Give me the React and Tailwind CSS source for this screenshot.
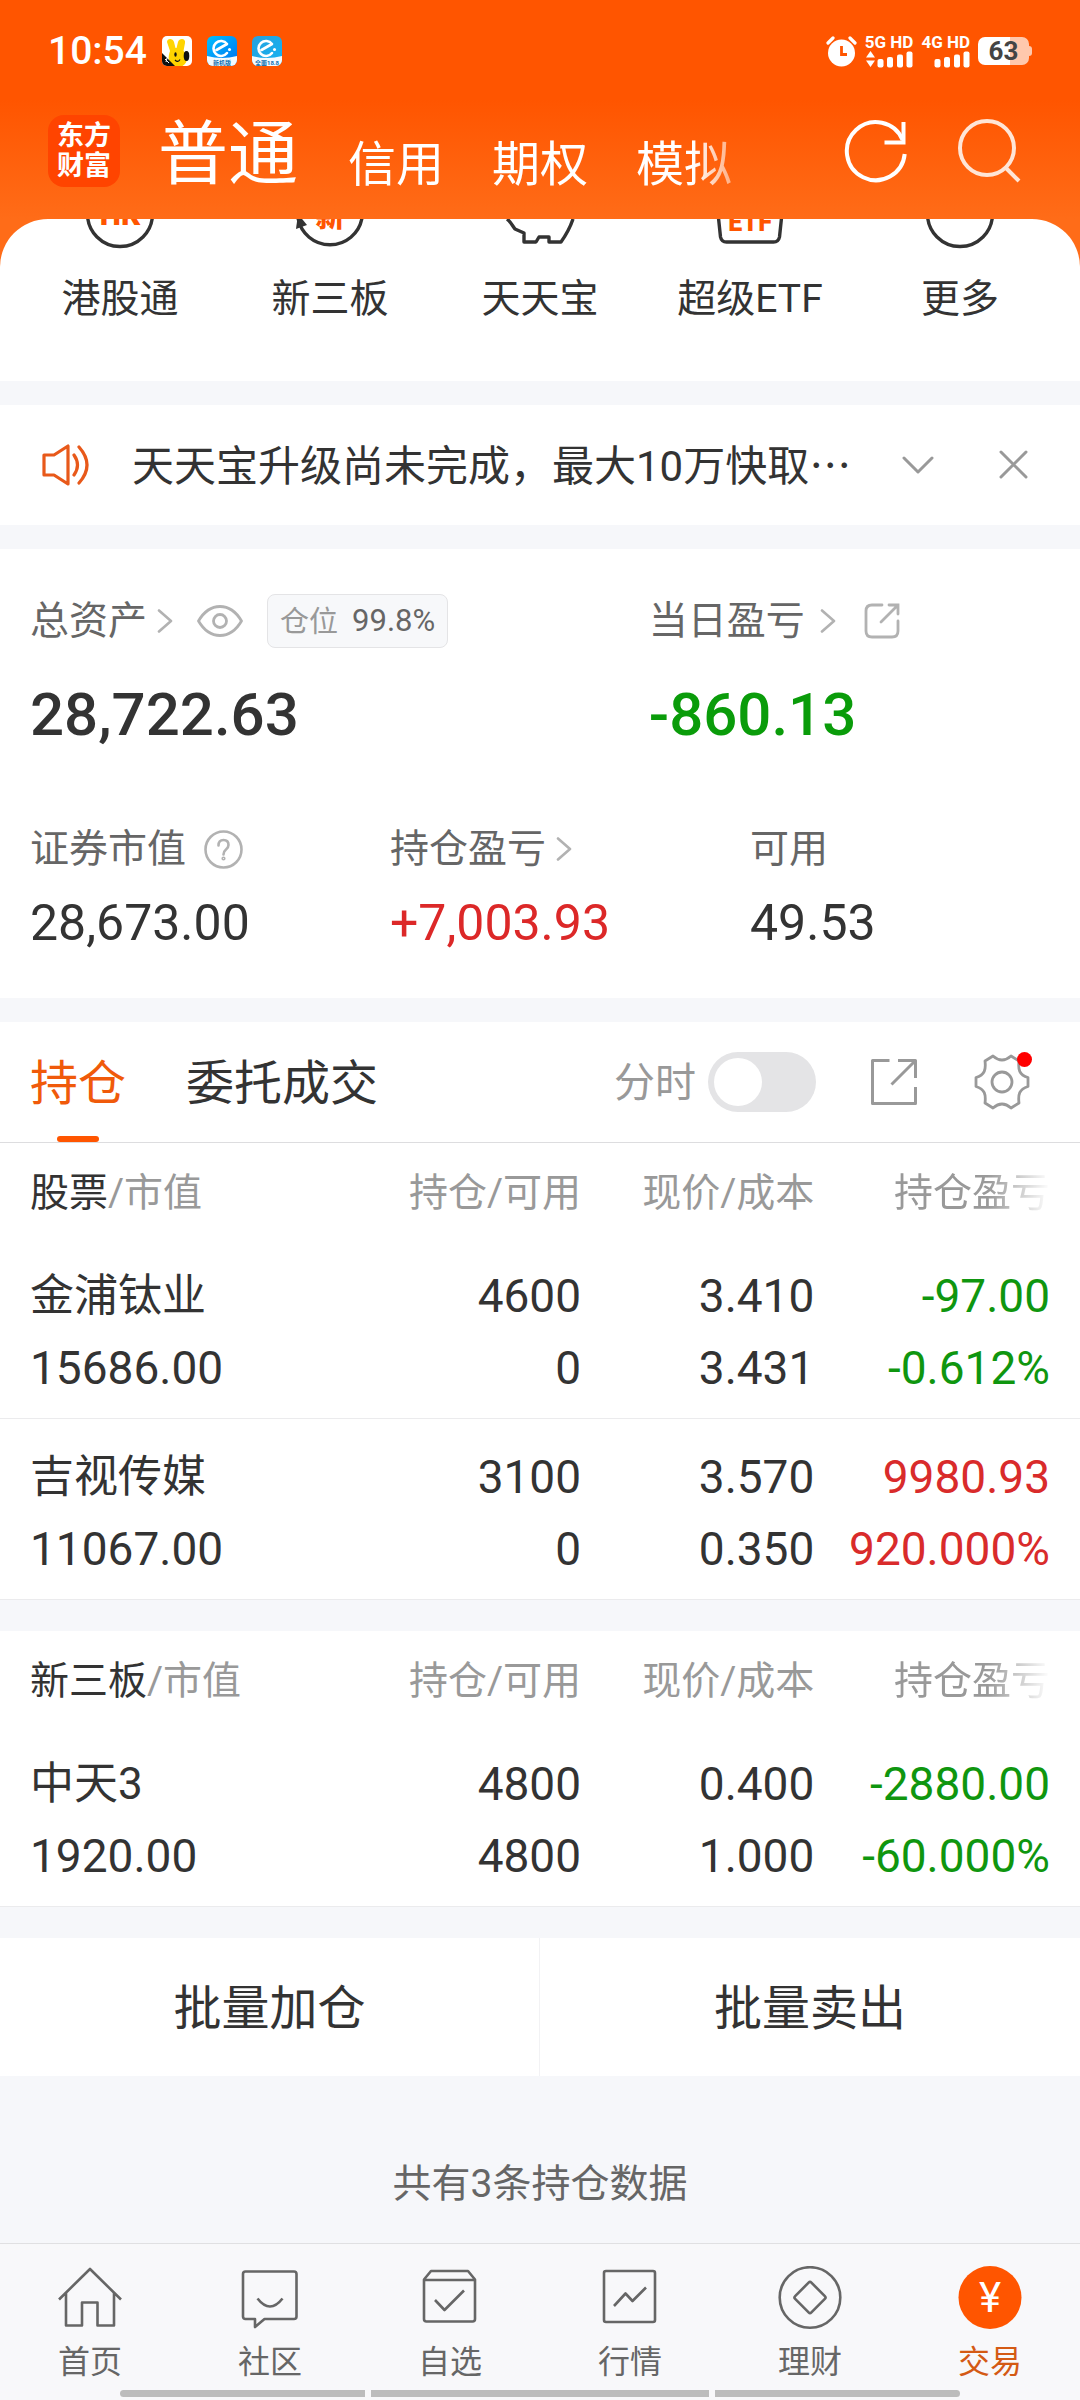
import React from "react";

const TOP_TABS = ["信用", "期权", "模拟"];

const STOCK_GROUPS = [
  {
    title: "股票",
    rows: [
      { name: "金浦钛业", value: "15686.00", held: "4600", usable: "0", price: "3.410", cost: "3.431", profit: "-97.00", rate: "-0.612%" },
      { name: "吉视传媒", value: "11067.00", held: "3100", usable: "0", price: "3.570", cost: "0.350", profit: "9980.93", rate: "920.000%" },
    ],
  },
  {
    title: "新三板",
    rows: [
      { name: "中天3", value: "1920.00", held: "4800", usable: "4800", price: "0.400", cost: "1.000", profit: "-2880.00", rate: "-60.000%" },
    ],
  },
];

const ChevronRight = () => (
  <svg className="h-6 w-4 shrink-0 text-[#b2b2b2]" viewBox="0 0 16 24" fill="none" stroke="currentColor" strokeWidth="2.6" strokeLinecap="round" strokeLinejoin="round">
    <path d="M2 1.5 14 12 2 22.5" />
  </svg>
);

const RabbitAppIcon = () => (
  <svg className="size-[30px]" viewBox="0 0 30 30">
    <defs>
      <clipPath id="rabbit-clip">
        <rect width="30" height="30" rx="5" />
      </clipPath>
    </defs>
    <g clipPath="url(#rabbit-clip)">
      <rect width="30" height="30" fill="#fff" />
      <path d="M5 6c0-4 6-4 7 0l1.5 6h1L16 6c1-4 8-4 7 1l-1.5 8c5 3 5 12-1 15H10C6 28 6 20 8 15Z" fill="#ffd400" />
      <ellipse cx="24.5" cy="20" rx="2.8" ry="5" fill="#111" />
      <ellipse cx="13.5" cy="18.5" rx="1.2" ry="2.2" fill="#111" />
      <path d="M13 24q3 3 5-.5" fill="none" stroke="#111" strokeWidth="1.2" />
      <path d="M0 17 13 30H0Z" fill="#111" />
      <path d="m3 23 4 4M5 22l-1 4" stroke="#fff" strokeWidth="1" />
    </g>
  </svg>
);

const EleAppIcon = ({ id, from, to, label }) => (
  <svg className="size-[30px]" viewBox="0 0 30 30">
    <defs>
      <clipPath id={id}>
        <rect width="30" height="30" rx="6" />
      </clipPath>
      <linearGradient id={`${id}-fill`} x1="0" y1="0" x2="1" y2="1">
        <stop stopColor={from} />
        <stop offset="1" stopColor={to} />
      </linearGradient>
    </defs>
    <g clipPath={`url(#${id})`}>
      <rect width="30" height="30" fill={`url(#${id}-fill)`} />
      <path d="M0 20q15 4 30 0v10H0Z" fill="#f3fbff" />
      <path d="m9.5 14 10.5-6A7.5 7.5 0 1 0 20 17" fill="none" stroke="#fff" strokeWidth="2.6" strokeLinecap="round" strokeLinejoin="round" />
      <circle cx="22.5" cy="13.5" r="1.5" fill="#fff" />
      <text x="15" y="28.5" textAnchor="middle" fontSize="6" fontWeight="700" fill="#0f6fae">{label}</text>
    </g>
  </svg>
);

const Signal = ({ label, arrows }) => (
  <div className="flex flex-col items-end">
    <span className="text-[17px] leading-4 font-bold">{label}</span>
    <svg className="h-[18px] w-[48px]" viewBox="0 0 48 18" fill="currentColor">
      {arrows && <path d="m5.5 1 4.5 6.5H1ZM5.5 17 10 10.5H1Z" />}
      <rect x="12.5" y="9" width="6" height="8.5" rx="2" />
      <rect x="22" y="7" width="6" height="10.5" rx="2" />
      <rect x="32" y="4.5" width="6" height="13" rx="2" />
      <rect x="41.5" y="1.5" width="6" height="16" rx="2" />
    </svg>
  </div>
);

const StatusBar = () => (
  <div className="flex items-center justify-between pt-7 pr-12 pl-12">
    <div className="flex items-center gap-[15px]">
      <span className="text-[39px] leading-[46px] font-medium">10:54</span>
      <RabbitAppIcon />
      <EleAppIcon id="ele-a" from="#00c0ff" to="#0070f0" label="新机版" />
      <EleAppIcon id="ele-b" from="#2aa0dc" to="#10b4f4" label="全面18.8" />
    </div>
    <div className="flex items-center gap-2">
      <svg className="size-[31px]" viewBox="0 0 31 31">
        <circle cx="15.5" cy="17" r="13.5" fill="#fff" />
        <path d="m2 7 5-5M29 7l-5-5" stroke="#fff" strokeWidth="3.2" strokeLinecap="round" />
        <path d="M15.5 10v8.5H21" fill="none" stroke="#ff5500" strokeWidth="2.8" />
      </svg>
      <Signal label="5G HD" arrows />
      <Signal label="4G HD" />
      <div className="flex items-center">
        <span className="flex h-7 w-[51px] items-center justify-center rounded-[7px] bg-[linear-gradient(90deg,#fff_63%,#ffc8ad_63%)] text-[26px] font-bold text-[#444]">
          63
        </span>
        <span className="h-[10px] w-[3px] rounded-r-sm bg-[#ffc8ad]" />
      </div>
    </div>
  </div>
);

const TopBar = () => (
  <div className="flex h-[145px] items-start pt-[41px] pr-[58px] pl-12">
    <div className="flex h-[72px] w-[72px] shrink-0 flex-col items-center justify-center rounded-2xl bg-[#ff4400] text-[27px] leading-[30px] font-bold">
      <span>东方</span>
      <span>财富</span>
    </div>
    <nav className="ml-[38px] flex min-w-0 flex-1 items-end gap-[50px] pt-1 [mask-image:linear-gradient(90deg,#000_535px,transparent_610px)]">
      <button className="text-[70px] leading-[72px]">普通</button>
      <div className="flex gap-12">
        {TOP_TABS.map((tab) => (
          <button key={tab} className="text-5xl leading-[52px] whitespace-nowrap">{tab}</button>
        ))}
      </div>
    </nav>
    <div className="flex shrink-0 gap-[50px]">
      <button aria-label="刷新">
        <svg className="h-[72px] w-16" viewBox="0 0 64 72" fill="none" stroke="#fff" strokeWidth="4">
          <path d="M60.7 39A29 29 0 1 1 58.6 25" />
          <path d="M59.5 7v20.5H40.5" />
        </svg>
      </button>
      <button aria-label="搜索">
        <svg className="h-[72px] w-16" viewBox="0 0 64 72" fill="none" stroke="#ffe5d6" strokeWidth="4">
          <circle cx="29" cy="33" r="27" />
          <path d="m47 52 14 14" />
        </svg>
      </button>
    </div>
  </div>
);

const SHORTCUTS = [
  {
    label: "港股通",
    icon: (
      <>
        <circle cx="36" cy="36" r="32.5" />
        <text x="36" y="47" textAnchor="middle" fontSize="30" fontWeight="900" fill="#ff5500" stroke="none">HK</text>
      </>
    ),
  },
  {
    label: "新三板",
    icon: (
      <>
        <path d="M4 40A32.5 32.5 0 0 0 68 40" />
        <path d="M4 36 2 51l11-4Z" fill="#333" stroke="none" />
        <text x="36" y="49" textAnchor="middle" fontSize="29" fontWeight="900" fill="#ff5500" stroke="none">新</text>
      </>
    ),
  },
  {
    label: "天天宝",
    icon: <path d="M3 41c3 2 5 6 8 10l9 4v9h12l3-5h10v5h12c5-7 9-14 12-23" />,
  },
  {
    label: "超级ETF",
    icon: (
      <>
        <path d="m4.5 40 2 19q1 5 6 5h47q5 0 6-5l2-19" />
        <text x="36" y="53" textAnchor="middle" fontSize="25" fontWeight="900" fill="#ff5500" stroke="none">ETF</text>
      </>
    ),
  },
  { label: "更多", icon: <circle cx="36" cy="36" r="32.5" /> },
];

const Shortcuts = () => (
  <section className="grid grid-cols-5 overflow-hidden rounded-t-[48px] bg-white px-[15px] pb-[54px]">
    {SHORTCUTS.map(({ label, icon }) => (
      <a key={label} href="#" className="-mt-[41px] flex flex-col items-center gap-[21px] text-[39px] leading-[56px]">
        <svg className="size-[72px]" viewBox="0 0 72 72" fill="none" stroke="#333" strokeWidth="3.4" strokeLinejoin="round">
          {icon}
        </svg>
        {label}
      </a>
    ))}
  </section>
);

const Notice = () => (
  <section className="flex h-[120px] items-center bg-white pr-[50px] pl-10">
    <svg className="h-11 w-[52px] shrink-0" viewBox="0 0 52 44" fill="none" stroke="#e8591a" strokeWidth="3.2" strokeLinecap="round" strokeLinejoin="round">
      <path d="M4 12h10L28 3v38L14 32H4Z" />
      <path d="M34 12q7 10 0 20M39 4q16 18 0 36" />
    </svg>
    <p className="ml-10 min-w-0 flex-1 text-[42px] leading-[60px] whitespace-nowrap">
      天天宝升级尚未完成，最大10万快取<span className="font-['Noto_Sans_CJK_SC',sans-serif]">…</span>
    </p>
    <button aria-label="展开" className="mr-16">
      <svg className="h-8 w-8" viewBox="0 0 32 32" fill="none" stroke="#999" strokeWidth="3" strokeLinecap="round" strokeLinejoin="round">
        <path d="m2 9 14 14L30 9" />
      </svg>
    </button>
    <button aria-label="关闭">
      <svg className="h-8 w-8" viewBox="0 0 32 32" fill="none" stroke="#999" strokeWidth="3" strokeLinecap="round">
        <path d="m3 3 25 25M28 3 3 28" />
      </svg>
    </button>
  </section>
);

const Assets = () => (
  <section className="bg-white pt-[45px] pb-[43px] text-[39px] text-[#666]">
    <div className="flex">
      <div className="w-[57.2%] pl-[30px]">
        <div className="flex h-[54px] items-center">
          <a href="#" className="flex items-center gap-[10px]">总资产<ChevronRight /></a>
          <button aria-label="隐藏资产" className="ml-6">
            <svg className="h-8 w-[46px]" viewBox="0 0 46 32" fill="none" stroke="#b2b2b2" strokeWidth="2.8" strokeLinejoin="round">
              <path d="M1.5 16Q10 1.5 23 1.5T44.5 16Q36 30.5 23 30.5T1.5 16Z" />
              <circle cx="23" cy="16" r="6.5" />
            </svg>
          </button>
          <span className="ml-6 flex h-[54px] items-center gap-[14px] rounded-lg border border-[#e4e4e6] bg-[#f7f8fa] px-3 text-[31px]">
            <span className="pt-[3px] text-[29px] text-[#999]">仓位</span>
            99.8%
          </span>
        </div>
        <div className="mt-[27px] text-[60px] leading-[80px] font-medium text-[#333]">28,722.63</div>
      </div>
      <div className="flex-1 pl-[31px]">
        <div className="flex h-[54px] items-center">
          <a href="#" className="flex items-center gap-[15px]">当日盈亏<ChevronRight /></a>
          <button aria-label="分享当日盈亏" className="ml-7">
            <svg className="size-9" viewBox="0 0 36 36" fill="none" stroke="#b2b2b2" strokeWidth="2.8" strokeLinecap="round">
              <path d="M18 2H8Q2 2 2 8v20q0 6 6 6h20q6 0 6-6V18" />
              <path d="M25 2h9v9M33 3 17 19" />
            </svg>
          </button>
        </div>
        <div className="mt-[27px] text-[60px] leading-[80px] font-medium text-[#0a9c0a]">-860.13</div>
      </div>
    </div>
    <div className="mt-[66px] grid grid-cols-3 *:pl-[30px]">
      <div>
        <div className="flex h-14 items-center gap-[18px]">
          证券市值
          <svg className="size-[39px]" viewBox="0 0 39 39" fill="none" stroke="#b2b2b2" strokeWidth="2.6">
            <circle cx="19.5" cy="19.5" r="18" />
            <path d="M14.5 15.5q0-5.5 5-5.5t5 5q0 2.5-2.5 4.5t-2.5 5" strokeLinecap="round" />
            <circle cx="19.5" cy="28.5" r=".8" />
          </svg>
        </div>
        <div className="mt-[14px] text-[50px] leading-[64px] text-[#333]">28,673.00</div>
      </div>
      <div>
        <a href="#" className="flex h-14 items-center gap-[10px]">持仓盈亏<ChevronRight /></a>
        <div className="mt-[14px] text-[50px] leading-[64px] text-[#dc2828]">+7,003.93</div>
      </div>
      <div>
        <div className="flex h-14 items-center">可用</div>
        <div className="mt-[14px] text-[50px] leading-[64px] text-[#333]">49.53</div>
      </div>
    </div>
  </section>
);

const PositionTabs = () => (
  <div className="flex h-[121px] items-center justify-between border-b border-[#dddddf] bg-white pr-[50px] pl-[30px]">
    <div className="flex h-full gap-[60px] text-5xl">
      <button className="relative h-full pt-1 text-[#f05a0a]">
        持仓
        <span className="absolute bottom-0 left-1/2 h-[6px] w-[42px] -translate-x-1/2 rounded-full bg-[#ff5500]" />
      </button>
      <button className="h-full pt-1">委托成交</button>
    </div>
    <div className="flex items-center">
      <label className="flex items-center gap-3 text-[41px] text-[#999]">
        <span className="pt-[3px]">分时</span>
        <input
          type="checkbox"
          className="h-[60px] w-[108px] appearance-none rounded-full bg-[#e4e4e6] p-[6px] before:block before:size-12 before:rounded-full before:bg-white checked:bg-[#ff5500] checked:before:translate-x-12"
        />
      </label>
      <button aria-label="分享持仓" className="ml-[54px]">
        <svg className="size-12" viewBox="0 0 48 48" fill="none" stroke="#999" strokeWidth="3" strokeLinejoin="round">
          <path d="M19.5 2.5h-17v43h43V29" />
          <path d="M28 2.5h17.5V20M44 4 21.5 26.5" />
        </svg>
      </button>
      <button aria-label="设置" className="relative ml-14">
        <svg className="size-14" viewBox="0 0 56 56" fill="none" stroke="#999" strokeWidth="2.8" strokeLinejoin="round">
          <path d="M19 2Q28 10 37 2L45 7C44 15 45 21 54 23.5V32.5C45 35 44 41 45 49L37 54Q28 46 19 54L11 49C12 41 11 35 2 32.5V23.5C11 21 12 15 11 7Z" />
          <circle cx="28" cy="28" r="10" />
        </svg>
        <span className="absolute -top-[2px] -right-[2px] size-[15px] rounded-full bg-[#ff0000]" />
      </button>
    </div>
  </div>
);

const PositionTable = ({ title, rows }) => (
  <table className="w-full table-fixed bg-white text-right text-[46px] leading-[72px]">
    <colgroup>
      <col />
      <col className="w-[20%]" />
      <col className="w-[21.6%]" />
      <col className="w-[24.6%]" />
    </colgroup>
    <thead>
      <tr className="h-[95px] text-[39px] whitespace-nowrap text-[#999] *:pt-1 *:font-normal">
        <th className="pl-[30px] text-left"><span className="text-[#333]">{title}</span>/市值</th>
        <th>持仓/可用</th>
        <th>现价/成本</th>
        <th className="pr-[30px]">
          <span className="[mask-image:linear-gradient(90deg,#000_60%,transparent)]">持仓盈亏</span>
        </th>
      </tr>
    </thead>
    <tbody>
      {rows.map((row) => (
        <tr key={row.name} className="border-b border-[#ebebed] *:pt-[22px] *:pb-[14px]">
          <td className="pl-[30px] text-left">
            <div className="text-[44px]">{row.name}</div>
            <div>{row.value}</div>
          </td>
          <td>
            <div>{row.held}</div>
            <div>{row.usable}</div>
          </td>
          <td>
            <div>{row.price}</div>
            <div>{row.cost}</div>
          </td>
          <td className={`pr-[30px] ${row.profit.startsWith("-") ? "text-[#0f960f]" : "text-[#d92b2b]"}`}>
            <div>{row.profit}</div>
            <div>{row.rate}</div>
          </td>
        </tr>
      ))}
    </tbody>
  </table>
);

const NAV_ITEMS = [
  { label: "首页", icon: <path d="M1 33.5 32 3l31 30.5M8 27v32.5h16v-23h15.5v23H56V27" /> },
  {
    label: "社区",
    icon: (
      <>
        <path d="M7.5 5.5H56q2.5 0 2.5 2.5v42.5q0 2.5-2.5 2.5H26.5L17 61V53H7.5Q5 53 5 50.5V8q0-2.5 2.5-2.5Z" />
        <path d="M19.5 32.5q12.5 16 25 0" />
      </>
    ),
  },
  {
    label: "自选",
    icon: (
      <>
        <path d="M6 13.5 13 5h37l7 8.5V53q0 2.5-2.5 2.5h-46Q6 55.5 6 53ZM6 14h51" />
        <path d="m17 34 9.5 10L46 24.5" />
      </>
    ),
  },
  {
    label: "行情",
    icon: (
      <>
        <rect x="6" y="5" width="51" height="51" rx="2" />
        <path d="m16 40 11.5-12.5 7 7.5L48 21.5" />
      </>
    ),
  },
  {
    label: "理财",
    icon: (
      <>
        <circle cx="32" cy="31.5" r="30.3" />
        <rect x="20.5" y="20" width="23" height="23" rx="2" transform="rotate(45 32 31.5)" />
      </>
    ),
  },
  {
    label: "交易",
    active: true,
    icon: (
      <>
        <circle cx="32" cy="31.5" r="31.5" fill="#ff5500" stroke="none" />
        <text x="32" y="46" textAnchor="middle" fontSize="42" fill="#fff" stroke="none">¥</text>
      </>
    ),
  },
];

const BottomNav = () => (
  <footer className="border-t border-[#e0e0e2] bg-[#f8f8fa] pt-[22px] pb-[3px]">
    <nav className="grid grid-cols-6">
      {NAV_ITEMS.map(({ label, icon, active }) => (
        <a
          key={label}
          href="#"
          className={`flex flex-col items-center gap-3 text-[32px] leading-10 ${active ? "text-[#d45a14]" : "text-[#666]"}`}
        >
          <svg className="size-16" viewBox="0 0 64 64" fill="none" stroke="currentColor" strokeWidth="2.6" strokeLinejoin="round">
            {icon}
          </svg>
          {label}
        </a>
      ))}
    </nav>
    {/* gesture bar */}
    <div className="mx-[11.1%] mt-2 grid h-[7px] grid-cols-[245fr_338fr_245fr] gap-[6px] overflow-hidden rounded-full *:bg-[#bcbcbc]">
      <span />
      <span />
      <span />
    </div>
  </footer>
);

const App = () => {
  return (
    <div className="min-h-screen bg-[#f6f7fa] font-['Roboto','Noto_Sans_CJK_SC',sans-serif] text-[#333]">
      <div className="bg-[linear-gradient(180deg,#ff5500_100px,#ff6c18_219px)]">
        <header className="text-white">
          <StatusBar />
          <TopBar />
        </header>
        <Shortcuts />
      </div>

      <main>
        <div className="mt-6">
          <Notice />
        </div>
        <div className="mt-6">
          <Assets />
        </div>
        <div className="mt-6">
          <PositionTabs />
          <div className="flex flex-col gap-[31px]">
            {STOCK_GROUPS.map((group) => (
              <PositionTable key={group.title} {...group} />
            ))}
          </div>
        </div>

        <div className="mt-[31px] grid grid-cols-2 divide-x divide-[#f2f2f4] bg-white text-5xl">
          <button className="h-[138px] pt-1">批量加仓</button>
          <button className="h-[138px] pt-1">批量卖出</button>
        </div>
        <p className="pt-20 pb-[31px] text-center text-[39px] leading-[56px] text-[#666]">共有3条持仓数据</p>
      </main>

      <BottomNav />
    </div>
  );
};

export default App;
